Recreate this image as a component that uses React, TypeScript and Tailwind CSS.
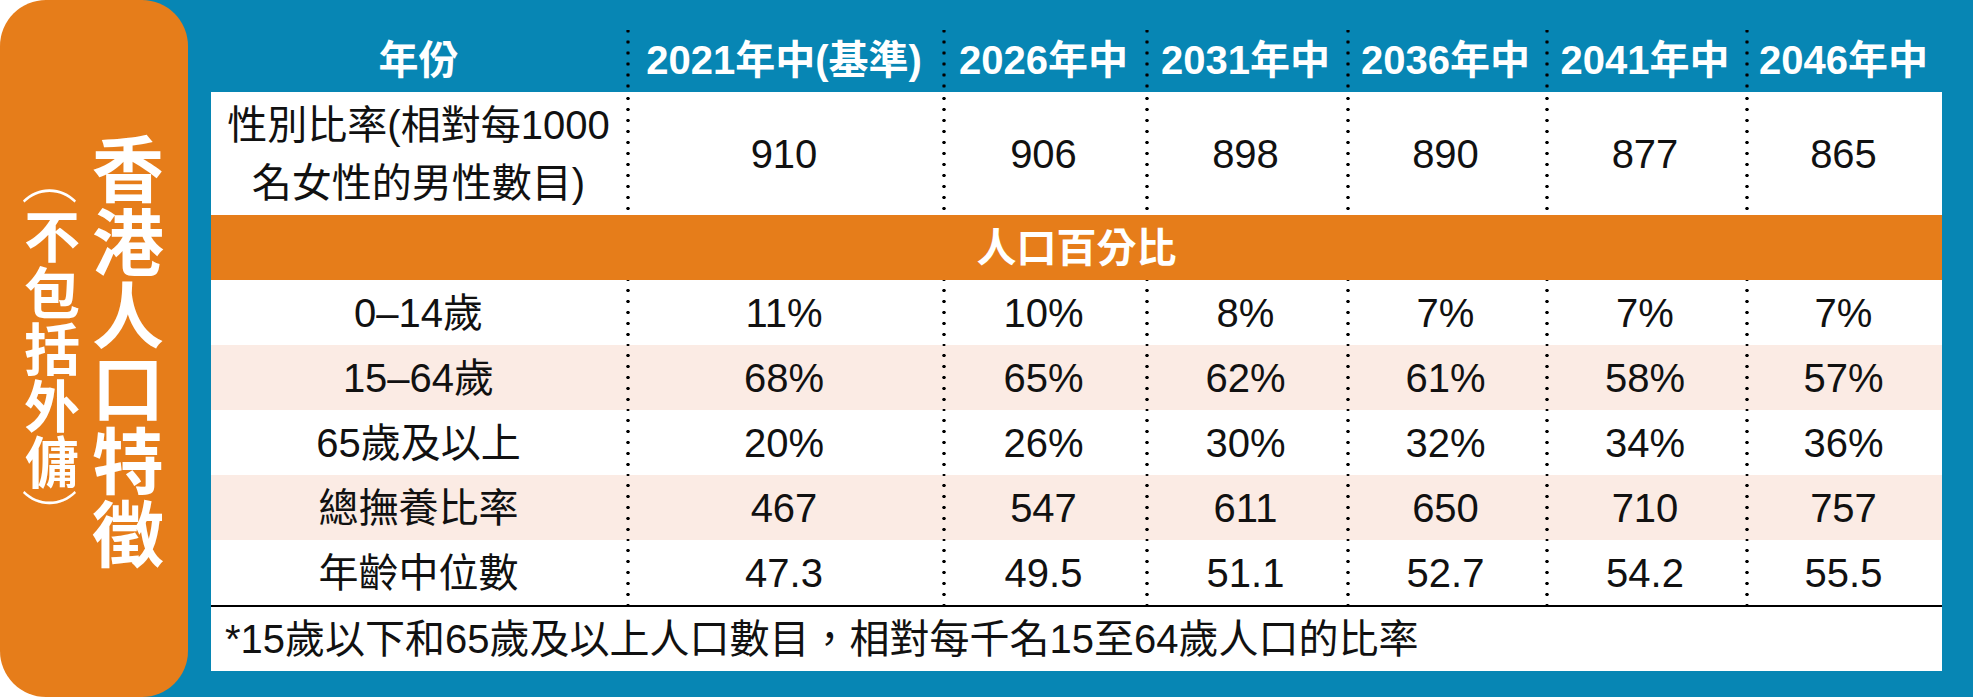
import React from "react";

const years = ["2021年中(基準)", "2026年中", "2031年中", "2036年中", "2041年中", "2046年中"];

const sexRatio = ["910", "906", "898", "890", "877", "865"];

const rows = [
  { label: "0–14歲", values: ["11%", "10%", "8%", "7%", "7%", "7%"], pink: false },
  { label: "15–64歲", values: ["68%", "65%", "62%", "61%", "58%", "57%"], pink: true },
  { label: "65歲及以上", values: ["20%", "26%", "30%", "32%", "34%", "36%"], pink: false },
  { label: "總撫養比率", values: ["467", "547", "611", "650", "710", "757"], pink: true },
  { label: "年齡中位數", values: ["47.3", "49.5", "51.1", "52.7", "54.2", "55.5"], pink: false },
];

// dotted column divider, drawn on the left edge of every value cell
const dots =
  "bg-[image:radial-gradient(circle,#000_1.4px,transparent_2px)] bg-[length:4px_11px] bg-repeat-y bg-left";

const cols = "grid grid-cols-[415px_316px_203px_201px_199px_200px_197px]";

export default function App() {
  return (
    <div className="flex h-[697px] w-[1973px] bg-white font-['Liberation_Sans','Noto_Sans_CJK_TC',sans-serif]">
      {/* Side title, stacked one character per line */}
      <div className="relative z-10 flex h-full w-[188px] shrink-0 items-center justify-center gap-[12px] rounded-[46px] bg-[#e67d1a] font-['Noto_Sans_CJK_TC',sans-serif] text-white">
        <div className="mt-[-4px] flex w-[56px] flex-col items-center text-[56px] font-bold leading-[56.5px]">
          <span className="inline-block rotate-90 font-light">（</span>
          {"不包括外傭".split("").map((c) => (
            <span key={c}>{c}</span>
          ))}
          <span className="inline-block rotate-90 font-light">）</span>
        </div>
        <div className="mt-[-4px] flex w-[72px] flex-col items-center text-[72px] font-bold leading-[73px]">
          {"香港人口特徵".split("").map((c) => (
            <span key={c}>{c}</span>
          ))}
        </div>
      </div>

      {/* Table panel */}
      <div className="ml-[-94px] flex flex-1 flex-col bg-[#0786b4] pl-[117px] pr-[31px]">
        {/* Header */}
        <div className={`${cols} h-[92px] pt-[30px] text-[40px] font-bold text-white`}>
          <div className="flex items-center justify-center pb-[8px]">年份</div>
          {years.map((y) => (
            <div key={y} className={`${dots} flex items-center justify-center pb-[8px]`}>
              {y}
            </div>
          ))}
        </div>

        <div className="flex flex-col bg-white text-[40px] text-[#111]">
          {/* Sex ratio */}
          <div className={`${cols} h-[123px]`}>
            <div className="flex flex-col items-center justify-center leading-[58px]">
              <span>性別比率(相對每1000</span>
              <span>名女性的男性數目)</span>
            </div>
            {sexRatio.map((v, i) => (
              <div key={i} className={`${dots} flex items-center justify-center`}>
                {v}
              </div>
            ))}
          </div>

          {/* Section band */}
          <div className="flex h-[65px] items-center justify-center bg-[#e67d1a] text-[40px] font-bold text-white">
            人口百分比
          </div>

          {rows.map((r) => (
            <div key={r.label} className={`${cols} h-[65px] ${r.pink ? "bg-[#fbebe4]" : "bg-white"}`}>
              <div className="flex items-center justify-center">{r.label}</div>
              {r.values.map((v, i) => (
                <div key={i} className={`${dots} flex items-center justify-center`}>
                  {v}
                </div>
              ))}
            </div>
          ))}

          <div className="h-[2px] bg-black" />

          <div className="flex h-[64px] items-center pl-[14px] text-[40px]">
            *15歲以下和65歲及以上人口數目，相對每千名15至64歲人口的比率
          </div>
        </div>
      </div>
    </div>
  );
}
